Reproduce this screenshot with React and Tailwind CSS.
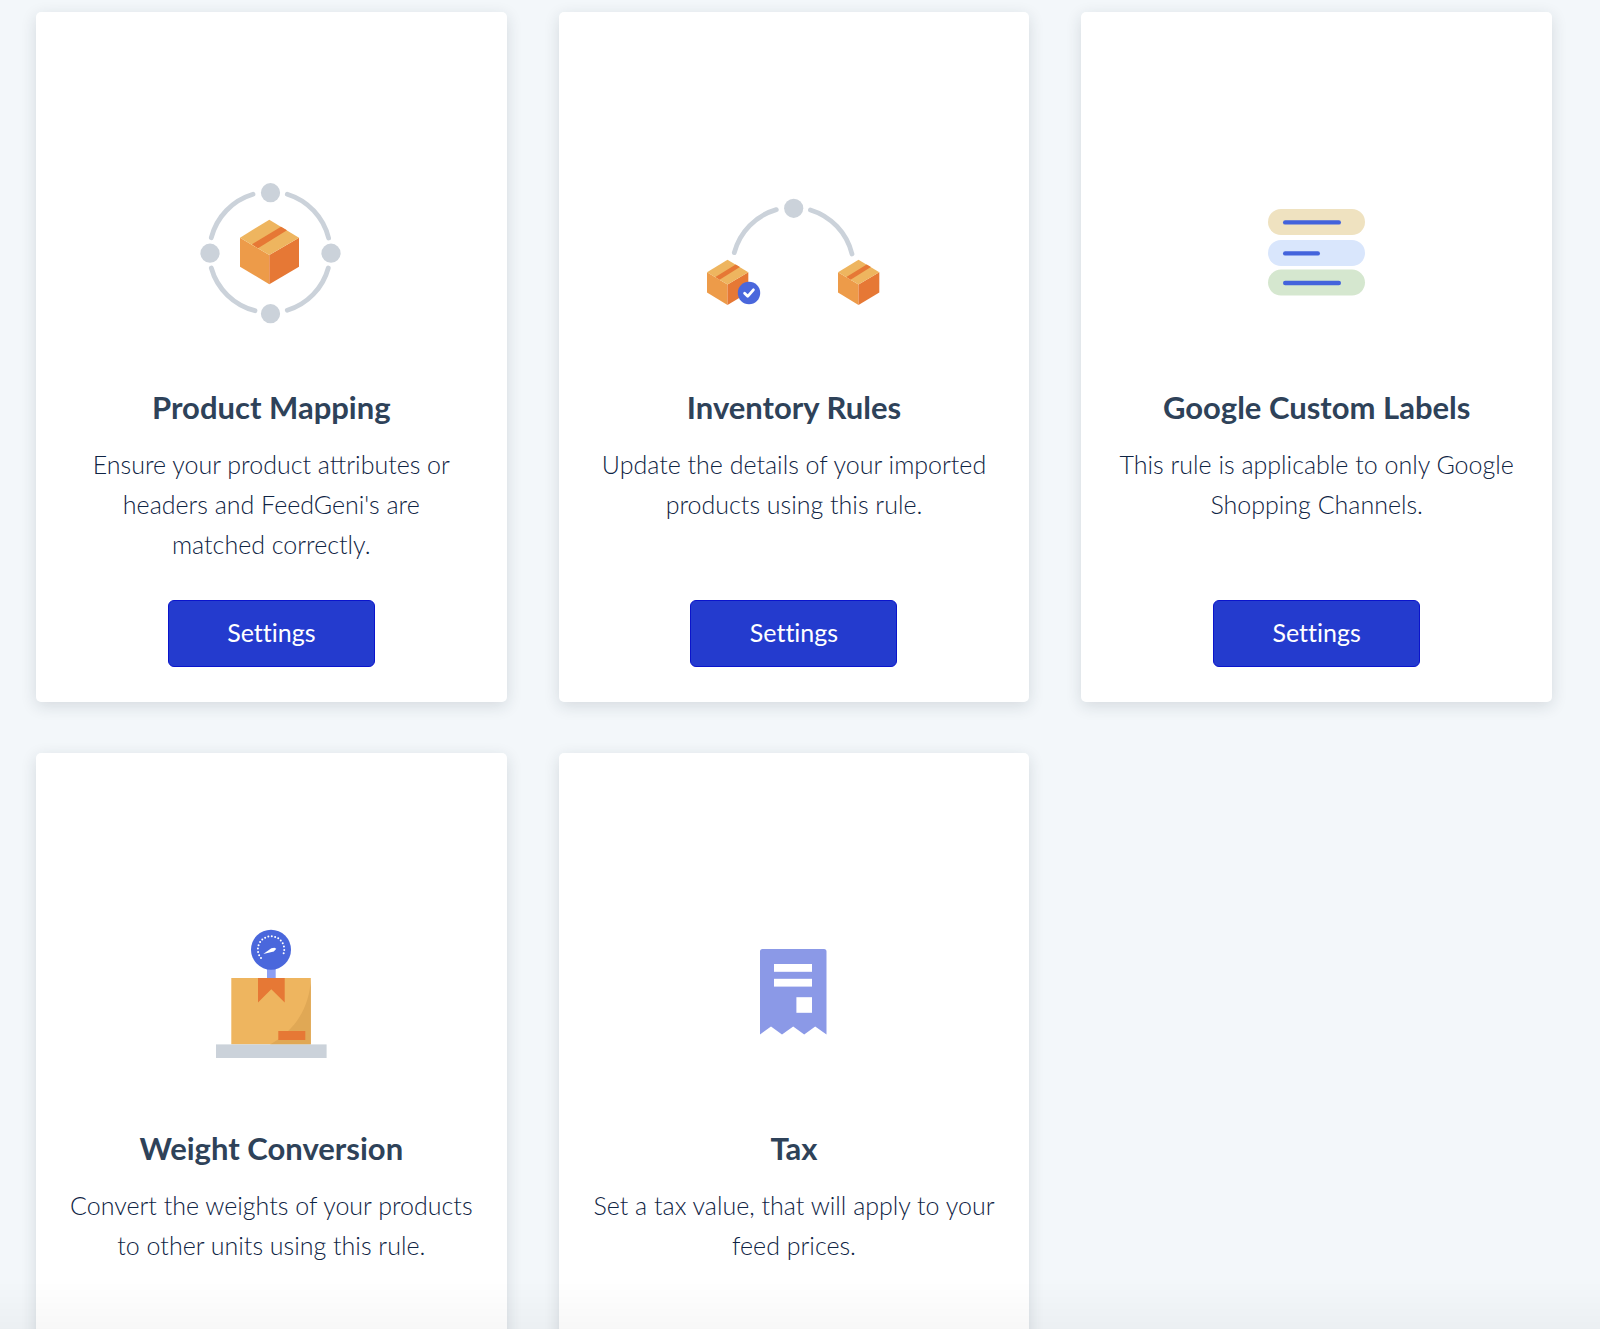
const Box = ({ transform }) => (
  <g transform={transform}>
    <path d="M0 18 L29.3 35.3 V64.6 L0 47 Z" fill="#ed9b49" />
    <path d="M59 18 L29.3 35.3 V64.6 L59 47 Z" fill="#e67835" />
    <path d="M29.3 0 L59 18 L29.3 35.3 L0 18 Z" fill="#eeb55f" />
    <path d="M41 7 L47 10.6 L18 28.6 L12 24.6 Z" fill="#e67835" />
  </g>
);

const MappingIcon = () => (
  <svg className="size-[200px]" viewBox="0 0 200 200" fill="none" aria-hidden="true">
    <g stroke="#cbd2da" strokeWidth="4.8" strokeLinecap="round">
      <path d="M40.3 84.7 A61 61 0 0 1 82 41.3" />
      <path d="M116.3 41.3 A61 61 0 0 1 157.6 85" />
      <path d="M40.3 115 A61 61 0 0 0 84 157.7" />
      <path d="M157.3 115 A61 61 0 0 1 116.3 157.3" />
    </g>
    <g fill="#cbd2da">
      <circle cx="99.5" cy="39.7" r="9.6" />
      <circle cx="39" cy="100.2" r="9.6" />
      <circle cx="160" cy="100.2" r="9.6" />
      <circle cx="99.5" cy="160.7" r="9.6" />
    </g>
    <Box transform="translate(69 66.7)" />
  </svg>
);

const InventoryIcon = () => (
  <svg className="size-[200px]" viewBox="0 0 200 200" fill="none" aria-hidden="true">
    <g stroke="#cbd2da" strokeWidth="4.8" strokeLinecap="round">
      <path d="M40.3 99.6 A61 61 0 0 1 82.3 56.6" />
      <path d="M116.4 57 A61 61 0 0 1 158 101" />
    </g>
    <circle cx="99.7" cy="55.3" r="9.6" fill="#cbd2da" />
    <Box transform="translate(13 106.7) scale(0.7)" />
    <Box transform="translate(144 106.7) scale(0.7)" />
    <circle cx="55" cy="140" r="11.2" fill="#4a67dc" />
    <path
      d="M50.6 140.2 L53.7 143.3 L59.4 136.8"
      stroke="#fff"
      strokeWidth="2.8"
      strokeLinecap="round"
      strokeLinejoin="round"
    />
  </svg>
);

const LabelsIcon = () => (
  <svg className="size-[200px]" viewBox="0 0 200 200" fill="none" aria-hidden="true">
    <rect x="51" y="56" width="97" height="26" rx="13" fill="#efe2c0" />
    <rect x="51" y="87" width="97" height="26" rx="13" fill="#d9e6fc" />
    <rect x="51" y="116.6" width="97" height="26" rx="13" fill="#d5e7cf" />
    <g stroke="#4363dc" strokeWidth="4.4" strokeLinecap="round">
      <path d="M68.2 69.4 H121.8" />
      <path d="M68.2 100.4 H100.8" />
      <path d="M68.2 130 H121.8" />
    </g>
  </svg>
);

const WeightIcon = () => (
  <svg className="size-[200px]" viewBox="0 0 200 200" fill="none" aria-hidden="true">
    <rect x="96" y="74" width="8.7" height="11" fill="#8c9ff5" />
    <circle cx="100" cy="55.7" r="20" fill="#4a67dc" />
    <path
      d="M90 64 A13.2 13.2 0 1 1 111.5 62"
      stroke="#fff"
      strokeWidth="2"
      strokeLinecap="round"
      strokeDasharray="0 3.4"
    />
    <path d="M92.3 60 L100.3 54.3 L103.5 53.8 L105.3 54.8 L102.8 57.6 Z" fill="#fff" />
    <rect x="60.3" y="84" width="79.5" height="66.4" fill="#eeb55f" />
    <path d="M139.8 84 C139 115 122 138 99 150.4 H139.8 Z" fill="#e0a855" />
    <path d="M87 84 H113.7 V108.4 L100.3 95.3 L87 108.4 Z" fill="#e67835" />
    <rect x="107.3" y="137" width="27" height="9" fill="#e67835" />
    <rect x="45" y="150.4" width="110.6" height="13.6" fill="#cbd2da" />
  </svg>
);

const TaxIcon = () => (
  <svg className="size-[200px]" viewBox="0 0 200 200" fill="none" aria-hidden="true">
    <path
      d="M68.5 55 H130 Q132.5 55 132.5 57.5 V140.4 L121.2 132.6 L110.2 140.4 L99.2 132.6 L88 140.4 L77 132.6 L66 140.4 V57.5 Q66 55 68.5 55 Z"
      fill="#8b99e7"
    />
    <g fill="#fff">
      <rect x="80" y="70" width="38" height="7.8" />
      <rect x="80" y="84.8" width="38" height="7.8" />
      <rect x="102.4" y="103.2" width="15.6" height="15.6" />
    </g>
  </svg>
);

const rules = [
  {
    title: "Product Mapping",
    text: "Ensure your product attributes or headers and FeedGeni's are\nmatched correctly.",
    Icon: MappingIcon,
  },
  {
    title: "Inventory Rules",
    text: "Update the details of your imported products using this rule.",
    Icon: InventoryIcon,
  },
  {
    title: "Google Custom Labels",
    text: "This rule is applicable to only Google Shopping Channels.",
    Icon: LabelsIcon,
  },
  {
    title: "Weight Conversion",
    text: "Convert the weights of your products to other units using this rule.",
    Icon: WeightIcon,
  },
  {
    title: "Tax",
    text: "Set a tax value, that will apply to your feed prices.",
    Icon: TaxIcon,
  },
];

const RuleCard = ({ title, text, Icon }) => (
  <article className="flex flex-col items-center rounded-[5px] bg-white px-8 pt-[141px] pb-[35px] text-center shadow-[0_4px_16px_rgba(30,40,60,0.14)]">
    <Icon />
    <h2 className="mt-9 text-[31px] leading-9 font-bold text-[#2e4259]">{title}</h2>
    <p className="mt-[19px] mb-9 min-h-[120px] text-[25px] leading-10 font-light whitespace-pre-line text-[#0f2444]">
      {text}
    </p>
    <button
      type="button"
      className="mt-auto h-[67px] w-[207px] cursor-pointer rounded-md border border-[#0a14cc] bg-[#243bce] pb-0.5 text-[25px] text-white [font-variant-ligatures:none] hover:bg-[#1d31b3]"
    >
      Settings
    </button>
  </article>
);

export default function App() {
  return (
    <main className="min-h-screen bg-[#f3f7fa] pt-3 pr-12 pb-12 pl-9 font-['Lato',sans-serif]">
      <div className="grid grid-cols-3 gap-x-[52px] gap-y-[51px]">
        {rules.map((rule) => (
          <RuleCard key={rule.title} {...rule} />
        ))}
      </div>
      {/* fade at the bottom edge of the window */}
      <div className="pointer-events-none fixed inset-x-0 bottom-0 h-12 bg-gradient-to-b from-transparent to-black/3"></div>
    </main>
  );
}
